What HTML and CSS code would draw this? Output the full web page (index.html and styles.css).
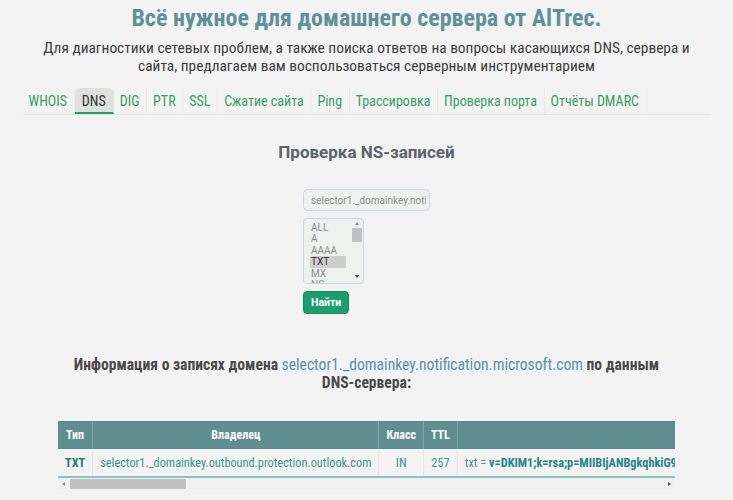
FILE: index.html
```html
<!DOCTYPE html>
<html lang="ru">
<head>
<meta charset="utf-8">
<title>AlTrec</title>
<link rel="stylesheet" href="styles.css">
</head>
<body>
<div class="page">
  <h1 class="title">Всё нужное для домашнего сервера от AlTrec.</h1>
  <p class="lead">Для диагностики сетевых проблем, а также поиска ответов на вопросы касающихся DNS, сервера и сайта, предлагаем вам воспользоваться серверным инструментарием</p>
  <nav class="tabs">
    <a class="tab">WHOIS</a>
    <a class="tab active">DNS</a>
    <a class="tab">DIG</a>
    <a class="tab">PTR</a>
    <a class="tab">SSL</a>
    <a class="tab">Сжатие сайта</a>
    <a class="tab">Ping</a>
    <a class="tab">Трассировка</a>
    <a class="tab">Проверка порта</a>
    <a class="tab">Отчёты DMARC</a>
  </nav>
  <h2 class="section-title">Проверка NS-записей</h2>
  <form class="form">
    <input class="field" type="text" value="selector1._domainkey.notification.microsoft.com">
    <div class="listbox">
      <div class="options">
        <span class="opt">ALL</span>
        <span class="opt">A</span>
        <span class="opt">AAAA</span>
        <span class="opt selected">TXT</span>
        <span class="opt">MX</span>
        <span class="opt">NS</span>
        <span class="opt">CNAME</span>
      </div>
      <div class="vscroll">
        <span class="arrow up"></span>
        <span class="vthumb"></span>
        <span class="vspace"></span>
        <span class="arrow down"></span>
      </div>
    </div>
    <button class="btn" type="button">Найти</button>
  </form>
  <p class="info">Информация о записях домена <a class="domain">selector1._domainkey.notification.microsoft.com</a> по данным DNS-сервера:</p>
  <div class="tablebox">
    <div class="table-scroll">
      <table class="records">
        <thead>
          <tr><th>Тип</th><th class="owner">Владелец</th><th>Класс</th><th>TTL</th><th class="data"></th></tr>
        </thead>
        <tbody>
          <tr>
            <td class="type">TXT</td>
            <td>selector1._domainkey.outbound.protection.outlook.com</td>
            <td>IN</td>
            <td>257</td>
            <td class="data">txt = <b>v=DKIM1;k=rsa;p=MIIBIjANBgkqhkiG9w0BAQEFAAOCAQ8AMIIBCgKCAQEAvWyktrIL8DO/+UGvMbv7cPd/Xogpbs7pgVw8y9ldO6AAMmg8+ijENl/oEpXgz0PrcQt3QkkuaWjcAUYDGeqhAfv6+CgFaKqBfLBS8hjvTD0ds8S9R7zG0TKgJZ8D9l2MUyuIxRQbMGWrKjLYHVCS1ExvOp6sNXxJV4bzc6gfIuCKEhpXxfgqQE0aaxfbDn5LGUtL5Cx6VZ7MnAQ8ruYcSt6hVHTE1GEJc/LOBZxrC5NfAK86CQvgB0WVNm3uKqsD7nYG7Ga4S6G0a/DlDkhYNtkQ3SlVSqBjE4oTqYKCG0fQfDAT3g9yLYb2fCsgSuMDmNy2WY1QdkWM1S+36xJJTsSxjDKdr2ShVj4D7FxpvXd2hV24iJU1Q==;t=s;</b></td>
          </tr>
        </tbody>
      </table>
    </div>
    <div class="hscroll">
      <span class="arrow left"></span>
      <span class="hthumb"></span>
      <span class="hspace"></span>
      <span class="arrow right"></span>
    </div>
  </div>
</div>
</body>
</html>
```

FILE: styles.css
```css
* { box-sizing: border-box; }
html, body { margin: 0; padding: 0; }
body {
  background: #f3f3f3;
  font-family: "Roboto Condensed", Roboto, "Liberation Sans", sans-serif;
  color: #444;
}
.page {
  width: 688px;
  margin: 0 auto;
  padding-top: 4px;
  display: flex;
  flex-direction: column;
  align-items: center;
}
.title {
  margin: 0;
  font-size: 24px;
  line-height: 28px;
  font-weight: 700;
  color: #5f9199;
  text-align: center;
}
.lead {
  margin: 7px 0 0;
  max-width: 660px;
  font-size: 15.4px;
  line-height: 18px;
  color: #3d3d3d;
  text-align: center;
}
.tabs {
  align-self: stretch;
  margin-top: 13px;
  display: flex;
  border-bottom: 1px solid #e6e6e6;
}
.tab {
  padding: 4px 6.7px 2px 6px;
  font-size: 14px;
  line-height: 18px;
  color: #3b9a6a;
  border-right: 1px solid #e8e8e8;
  border-bottom: 2px solid transparent;
}
.tab.active {
  background: #dde2de;
  color: #333;
  padding: 4px 7px 2px 7px;
  border-radius: 5px 5px 0 0;
  border-bottom-color: #2f9a66;
  border-right-color: transparent;
}
.section-title {
  margin: 26px 0 0;
  font-family: Roboto, "Liberation Sans", sans-serif;
  font-size: 17px;
  line-height: 22px;
  font-weight: 700;
  color: #5b6469;
}
.form {
  margin-top: 26px;
  display: flex;
  flex-direction: column;
  align-items: flex-start;
  gap: 7px;
}
.field {
  width: 127px;
  height: 22px;
  padding: 0 3px 0 7px;
  font-family: Roboto, "Liberation Sans", sans-serif;
  font-size: 10px;
  color: #8a8f8c;
  background: #eef2ef;
  border: 1px solid #c9d6e8;
  border-radius: 5px;
  outline: none;
}
.listbox {
  width: 61px;
  height: 66px;
  display: flex;
  padding: 3px 1px 0 6px;
  background: #eef2ef;
  border: 1px solid #c9d6e8;
  border-radius: 4px;
  overflow: hidden;
  font-family: Roboto, "Liberation Sans", sans-serif;
  font-size: 10px;
}
.options {
  width: 36px;
  display: flex;
  flex-direction: column;
  overflow: hidden;
}
.opt {
  padding: 0 1px;
  line-height: 11.4px;
  color: #8a8f8c;
  white-space: nowrap;
}
.opt.selected { background: #cdcdcd; color: #333; }
.vscroll {
  margin-left: auto;
  width: 10px;
  display: flex;
  flex-direction: column;
  align-items: center;
}
.vthumb {
  width: 10px;
  height: 14px;
  margin-top: 3px;
  background: #c1c1c1;
}
.vspace { flex: 1; }
.arrow {
  width: 0;
  height: 0;
  border: 2.5px solid transparent;
}
.arrow.up { border-bottom: 3px solid #8a8a8a; border-top-width: 0; }
.arrow.down { border-top: 3px solid #505050; border-bottom-width: 0; margin-bottom: 5px; }
.btn {
  height: 23px;
  padding: 0 7px;
  font-family: Roboto, "Liberation Sans", sans-serif;
  font-size: 10.5px;
  line-height: 21px;
  font-weight: 700;
  color: #fff;
  background: #1e9e70;
  border: 1px solid #178a5e;
  border-radius: 4px;
}
.info {
  margin: 43px 0 0;
  width: 617px;
  font-size: 15.6px;
  line-height: 17.5px;
  font-weight: 700;
  color: #4a4a4a;
  text-align: center;
}
.domain { font-weight: 400; color: #5a8fab; }
.tablebox {
  margin-top: 29px;
  width: 617px;
}
.table-scroll { overflow: hidden; }
.records {
  border-collapse: collapse;
  white-space: nowrap;
  font-size: 12.3px;
}
.records th {
  height: 28px;
  padding: 0 7px;
  background: #5e8e90;
  color: #fff;
  font-weight: 700;
  font-size: 12px;
  border-right: 1px solid #80a8aa;
}
.records th.owner { width: 292px; }
.records td {
  height: 28px;
  padding: 0 7px;
  color: #3a958a;
  text-align: center;
  border-right: 1px solid #e6e6e6;
  border-bottom: 2px solid #8cc3c4;
}
.records td.type { font-weight: 700; color: #25797a; }
.records td.data { text-align: left; }
.records td.data b { font-weight: 700; color: #26848a; }
.hscroll {
  height: 11px;
  display: flex;
  align-items: center;
  background: #f0f0f0;
  padding: 0 4px;
}
.arrow.left { border-right: 3px solid #8a8a8a; border-left-width: 0; margin-right: 5px; }
.arrow.right { border-left: 3px solid #505050; border-right-width: 0; }
.hthumb {
  width: 116px;
  height: 10px;
  background: #c1c1c1;
}
.hspace { flex: 1; }
```
